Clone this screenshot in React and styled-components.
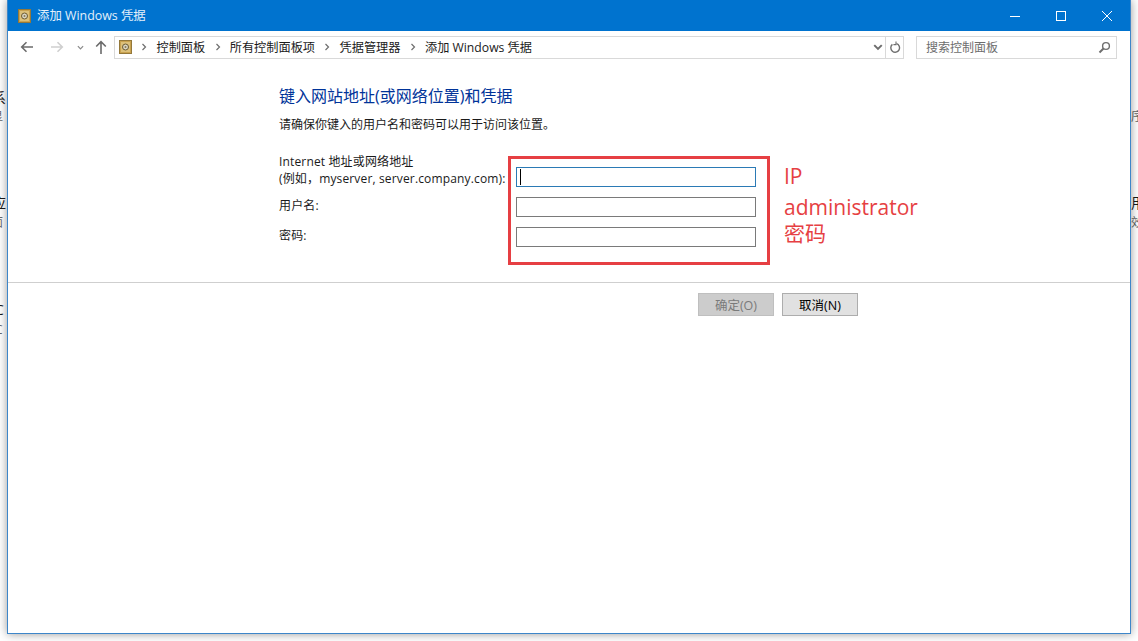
import React from 'react';
import styled, { createGlobalStyle } from 'styled-components';

const GlobalStyle = createGlobalStyle`
html, body {
  margin: 0;
  padding: 0;
  height: 100%;
  background: #ffffff;
  overflow: hidden;
}
* {
  box-sizing: border-box;
}
`;

const FONT = '"Open Sans", "Noto Sans CJK SC", sans-serif';

const Desktop = styled.div`
position: relative;
width: 1138px;
height: 641px;
padding-left: 7px;
overflow: hidden;
font-family: ${FONT};
background: #ffffff;
`;
const BehindText = styled.span`
position: absolute;
top: ${(p) => p.$top}px;
left: ${(p) => p.$left}px;
font-size: ${(p) => p.$size}px;
line-height: 1;
color: ${(p) => p.$color};
`;
const Window = styled.div`
position: relative;
display: flex;
flex-direction: column;
width: 1124px;
height: 634px;
background: #ffffff;
border: 1px solid #3d86c9;
border-top: none;
box-shadow: 0 0 9px rgba(0, 0, 0, 0.4);
`;
const TitleBar = styled.div`
display: flex;
align-items: center;
height: 31px;
padding-left: 10px;
background: #0073cf;
color: #ffffff;
`;
const TitleText = styled.span`
flex: 1;
margin-left: 6px;
padding-bottom: 2px;
font-size: 12.4px;
color: #e4f0fa;
`;
const WinButton = styled.div`
display: flex;
align-items: center;
justify-content: center;
width: 46px;
height: 31px;
`;
const NavBar = styled.div`
display: flex;
align-items: center;
height: 32px;
padding: 0 12px 0 10px;
`;
const NavButton = styled.div`
display: flex;
align-items: center;
justify-content: center;
width: ${(p) => p.$w}px;
height: 22px;
margin-left: ${(p) => p.$ml || 0}px;
`;
const AddressBar = styled.div`
display: flex;
align-items: center;
width: 790px;
height: 23px;
margin-left: 4px;
padding-left: 4px;
border: 1px solid #d9d9d9;
font-size: 12.2px;
color: #1a1a1a;
`;
const Crumb = styled.span`
padding-bottom: 1px;
white-space: nowrap;
`;
const CrumbArrow = styled.span`
display: flex;
width: 24.5px;
justify-content: center;
`;
const AddressTail = styled.div`
display: flex;
align-items: center;
margin-left: auto;
height: 100%;
`;
const RefreshBox = styled.div`
display: flex;
align-items: center;
justify-content: center;
width: 18px;
height: 100%;
margin-left: 2px;
border-left: 1px solid #d9d9d9;
`;
const SearchBox = styled.div`
display: flex;
align-items: center;
justify-content: space-between;
width: 201px;
height: 23px;
margin-left: 12px;
padding: 0 5px 0 9px;
border: 1px solid #d9d9d9;
font-size: 12px;
color: #6d6d6d;
`;
const Content = styled.div`
display: flex;
flex-direction: column;
padding: 21px 0 0 271px;
height: 184px;
`;
const Heading = styled.h1`
margin: 0;
height: 24px;
font-size: 16px;
font-weight: 400;
line-height: 24px;
color: #003399;
`;
const Intro = styled.p`
margin: 9px 0 0;
height: 16px;
font-size: 12px;
line-height: 16px;
color: #1a1a1a;
`;
const Form = styled.div`
display: grid;
grid-template-columns: 237px 240px;
grid-auto-rows: 20px;
row-gap: 10px;
margin-top: 34px;
`;
const Label = styled.label`
font-size: 12px;
letter-spacing: 0.15px;
line-height: 17px;
color: #1a1a1a;
white-space: nowrap;
transform: translateY(${(p) => p.$shift}px);
`;
const Field = styled.div`
position: relative;
height: 20px;
border: 1px solid ${(p) => (p.$focused ? '#2b7ab5' : '#7a7a7a')};
background: #ffffff;
`;
const Caret = styled.div`
position: absolute;
left: 3px;
top: 1px;
width: 1px;
height: 16px;
background: #000000;
`;
const Divider = styled.div`
height: 1px;
background: #cfcfcf;
margin-top: 35px;
`;
const ButtonRow = styled.div`
display: flex;
gap: 8px;
padding: 10px 0 0 690px;
`;
const Button = styled.div`
display: flex;
align-items: center;
justify-content: center;
width: 76px;
height: 23px;
font-size: 12.5px;
background: ${(p) => (p.$disabled ? '#cccccc' : '#e1e1e1')};
border: 1px solid ${(p) => (p.$disabled ? '#bfbfbf' : '#adadad')};
color: ${(p) => (p.$disabled ? '#7a7a7a' : '#000000')};
`;
const Highlight = styled.div`
position: absolute;
left: 508px;
top: 156px;
width: 262px;
height: 109px;
border: 3px solid #e63f43;
`;
const Note = styled.span`
position: absolute;
left: 784px;
top: ${(p) => p.$top}px;
font-size: 21px;
line-height: 28px;
color: #e63f43;
white-space: nowrap;
`;

const SafeIcon = () => (
  <svg width="13" height="14" viewBox="0 0 13 14">
    <rect x="0.5" y="0.5" width="12" height="13" fill="#c9a24f" stroke="#94783a" />
    <rect x="2" y="2" width="9" height="10" fill="#dcc07a" />
    <circle cx="6.5" cy="7" r="3" fill="#d9d5c4" stroke="#6b5a30" />
    <circle cx="6.5" cy="7" r="1" fill="#8a7a50" />
  </svg>
);

const ArrowLeft = ({ color }) => (
  <svg width="14" height="12" viewBox="0 0 14 12" fill="none" stroke={color} strokeWidth="1.6">
    <path d="M13 6H2M6.5 1.2 1.7 6l4.8 4.8" />
  </svg>
);

const ArrowRight = ({ color }) => (
  <svg width="14" height="12" viewBox="0 0 14 12" fill="none" stroke={color} strokeWidth="1.6">
    <path d="M1 6h11M7.5 1.2 12.3 6l-4.8 4.8" />
  </svg>
);

const ArrowUp = () => (
  <svg width="12" height="14" viewBox="0 0 12 14" fill="none" stroke="#6b6b6b" strokeWidth="1.6">
    <path d="M6 14V2M1.2 6.5 6 1.7l4.8 4.8" />
  </svg>
);

const Chevron = ({ size = 7, color = '#8a8a8a', width = 1.4 }) => (
  <svg width={size} height={size} viewBox="0 0 8 8" fill="none" stroke={color} strokeWidth={width}>
    <path d="M1 2.5 4 5.5 7 2.5" />
  </svg>
);

const Separator = () => (
  <CrumbArrow>
    <svg width="6" height="8" viewBox="0 0 6 8" fill="none" stroke="#6e6e6e" strokeWidth="1.2">
      <path d="M1.5 1 4.5 4 1.5 7" />
    </svg>
  </CrumbArrow>
);

const RefreshIcon = () => (
  <svg width="12" height="13" viewBox="0 0 12 13" fill="none" stroke="#6e6e6e" strokeWidth="1.4">
    <path d="M7.5 2.6A4.4 4.4 0 1 1 3.4 3.4" />
    <path d="M7 0.6V3.6H4.4" strokeWidth="1.1" />
  </svg>
);

const SearchIcon = () => (
  <svg width="13" height="13" viewBox="0 0 13 13" fill="none" stroke="#6e6e6e">
    <circle cx="8" cy="5" r="3.4" strokeWidth="1.4" />
    <path d="M5.5 7.5 1.5 11.5" strokeWidth="2" />
  </svg>
);

const crumbs = ['控制面板', '所有控制面板项', '凭据管理器', '添加 Windows 凭据'];

const fields = [
  { key: 'address', shift: -14, lines: ['Internet 地址或网络地址', '(例如，myserver, server.company.com):'], focused: true },
  { key: 'user', shift: 0, lines: ['用户名:'] },
  { key: 'password', shift: 0, lines: ['密码:'] },
];

const behind = [
  { text: '系', top: 91, left: -8, size: 14, color: '#1a1a1a' },
  { text: '显', top: 111, left: -9, size: 12, color: '#666666' },
  { text: '应', top: 196, left: -8, size: 14, color: '#1a1a1a' },
  { text: '面', top: 217, left: -9, size: 12, color: '#666666' },
  { text: 'C', top: 303, left: -5, size: 14, color: '#1a1a1a' },
  { text: 'C', top: 324, left: -5, size: 12, color: '#666666' },
  { text: '序', top: 111, left: 1131, size: 12, color: '#666666' },
  { text: '用', top: 196, left: 1131, size: 14, color: '#1a1a1a' },
  { text: '效', top: 217, left: 1131, size: 12, color: '#666666' },
];

export default function App() {
  return (
    <Desktop>
      <GlobalStyle />
      {behind.map((b) => (
        <BehindText key={b.text + b.top} $top={b.top} $left={b.left} $size={b.size} $color={b.color}>
          {b.text}
        </BehindText>
      ))}
      <Window>
        <TitleBar>
          <SafeIcon />
          <TitleText>添加 Windows 凭据</TitleText>
          <WinButton>
            <svg width="10" height="10" viewBox="0 0 10 10" stroke="#ffffff"><path d="M0 5.5h10" /></svg>
          </WinButton>
          <WinButton>
            <svg width="10" height="10" viewBox="0 0 10 10" fill="none" stroke="#ffffff"><rect x="0.5" y="0.5" width="9" height="9" /></svg>
          </WinButton>
          <WinButton>
            <svg width="10" height="10" viewBox="0 0 10 10" stroke="#ffffff"><path d="M0 0l10 10M10 0 0 10" /></svg>
          </WinButton>
        </TitleBar>
        <NavBar>
          <NavButton $w={18}><ArrowLeft color="#6b6b6b" /></NavButton>
          <NavButton $w={22} $ml={10}><ArrowRight color="#cfcfcf" /></NavButton>
          <NavButton $w={24}><Chevron /></NavButton>
          <NavButton $w={18}><ArrowUp /></NavButton>
          <AddressBar>
            <SafeIcon />
            <Separator />
            {crumbs.map((c, i) => (
              <React.Fragment key={c}>
                <Crumb>{c}</Crumb>
                {i < crumbs.length - 1 && <Separator />}
              </React.Fragment>
            ))}
            <AddressTail>
              <Chevron size={10} color="#6e6e6e" width={1.6} />
              <RefreshBox><RefreshIcon /></RefreshBox>
            </AddressTail>
          </AddressBar>
          <SearchBox>
            <span>搜索控制面板</span>
            <SearchIcon />
          </SearchBox>
        </NavBar>
        <Content>
          <Heading>键入网站地址(或网络位置)和凭据</Heading>
          <Intro>请确保你键入的用户名和密码可以用于访问该位置。</Intro>
          <Form>
            {fields.map((f) => (
              <React.Fragment key={f.key}>
                <Label $shift={f.shift}>
                  {f.lines.map((line) => (
                    <div key={line}>{line}</div>
                  ))}
                </Label>
                <Field $focused={f.focused}>{f.focused && <Caret />}</Field>
              </React.Fragment>
            ))}
          </Form>
        </Content>
        <Divider />
        <ButtonRow>
          <Button $disabled>确定(O)</Button>
          <Button>取消(N)</Button>
        </ButtonRow>
      </Window>
      <Highlight />
      <Note $top={162}>IP</Note>
      <Note $top={193}>administrator</Note>
      <Note $top={219}>密码</Note>
    </Desktop>
  );
}
